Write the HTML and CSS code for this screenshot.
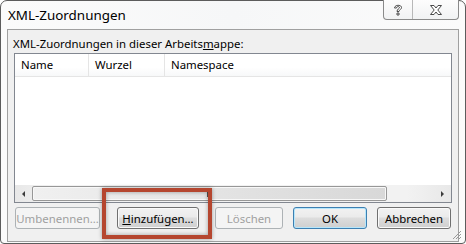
FILE: index.html
```html
<!DOCTYPE html>
<html lang="de">

<head>
    <meta charset="UTF-8">
    <title>XML-Zuordnungen</title>
    <link rel="stylesheet" href="styles.css">
</head>

<body>

    <div class="window">
        <div class="titlebar">
            <span class="title">XML-Zuordnungen</span>
        </div>

        <div class="capbuttons">
            <span class="capbtn help">
                <svg width="12" height="14" viewBox="0 0 12 14">
                    <path d="M2.5 5 C2.5 1.5 9.5 1.5 9.5 4.5 C9.5 6.5 7 6.8 7 8.5 L5 8.5 C5 6 7.5 5.8 7.5 4.5 C7.5 3.2 4.5 3.2 4.5 5 Z M5 10 L7 10 L7 12 L5 12 Z"
                        fill="#fff" stroke="#4a4a4a" stroke-width="1" stroke-linejoin="round" />
                </svg>
            </span>
            <span class="capbtn close">
                <svg width="14" height="12" viewBox="0 0 14 12">
                    <path d="M1.5 1.5 L5 1.5 L7 4 L9 1.5 L12.5 1.5 L8.8 6 L12.5 10.5 L9 10.5 L7 8 L5 10.5 L1.5 10.5 L5.2 6 Z"
                        fill="#fff" stroke="#4a4a4a" stroke-width="1" stroke-linejoin="round" />
                </svg>
            </span>
        </div>

        <div class="panel">
            <div class="caption">XML-Zuordnungen in dieser Arbeits<u>m</u>appe:</div>

            <div class="list">
                <div class="listhead">
                    <span class="col colname">Name</span>
                    <span class="col colroot">Wurzel</span>
                    <span class="col colns">Namespace</span>
                </div>
                <div class="listbody"></div>
                <div class="hscroll">
                    <span class="arrow left"></span>
                    <div class="track">
                        <div class="thumb"><span class="grip"></span></div>
                    </div>
                    <span class="arrow right"></span>
                </div>
            </div>

            <div class="buttons">
                <button class="btn disabled rename">Umbenennen…</button>
                <button class="btn add"><u>H</u>inzufügen…</button>
                <button class="btn disabled delete">Löschen</button>
                <button class="btn default ok">OK</button>
                <button class="btn cancel">Abbrechen</button>
            </div>
        </div>

        <svg class="sizegrip" width="10" height="10" viewBox="0 0 10 10">
            <path d="M9 1 L1 9 M9 4 L4 9 M9 7 L7 9" stroke="#9a9a9a" stroke-width="1" />
        </svg>
    </div>

    <div class="callout"></div>

</body>

</html>
```

FILE: styles.css
```css
html {
    font-family: "Noto Sans", "Open Sans", sans-serif;
    font-size: 11.4px;
}

body {
    margin: 0;
    background-color: #ffffff;
}

.window {
    box-sizing: border-box;
    position: relative;
    width: 466px;
    height: 244px;
    border: 1px solid #5c5c5c;
    border-radius: 7px 7px 4px 4px;
    background: linear-gradient(90deg, #fbfbfb, #f6f7f8 50%, #fbfbfb);
    padding: 0 6px 1px 6px;
    display: flex;
    flex-direction: column;
}

.titlebar {
    height: 28px;
    display: flex;
    align-items: center;
}

.title {
    font-size: 13.4px;
    padding-left: 1px;
    margin-top: -1px;
    color: #000000;
}

.capbuttons {
    position: absolute;
    top: -1px;
    left: 382px;
    width: 74px;
    height: 19px;
    border: 1px solid #8a8a8a;
    border-top: none;
    border-radius: 0 0 4px 4px;
    background: linear-gradient(#fdfdfd, #f1f2f3);
    display: flex;
}

.capbtn {
    display: flex;
    align-items: center;
    justify-content: center;
}

.help {
    width: 28px;
    border-right: 1px solid #b8b8b8;
}

.close {
    flex: 1;
}

.panel {
    flex: 1;
    border: 1px solid #a0a0a0;
    background-color: #f0f0f0;
    padding: 0 6px;
    display: flex;
    flex-direction: column;
}

.caption {
    margin-top: 6px;
    margin-left: -1px;
    line-height: 16px;
    height: 16px;
}

.list {
    box-sizing: border-box;
    margin-top: 1px;
    width: 438px;
    height: 150px;
    border: 1px solid #828790;
    background-color: #ffffff;
    display: flex;
    flex-direction: column;
}

.listhead {
    height: 22px;
    border-bottom: 1px solid #e5e5e5;
    background: linear-gradient(#ffffff 60%, #f7f8f9);
    display: flex;
    align-items: center;
}

.col {
    box-sizing: border-box;
    height: 22px;
    line-height: 22px;
    padding-left: 6px;
    border-right: 1px solid #e5e5e5;
}

.colname {
    width: 74px;
}

.colroot {
    width: 76px;
}

.colns {
    width: 150px;
    border-right: none;
}

.listbody {
    flex: 1;
}

.hscroll {
    height: 17px;
    background: linear-gradient(90deg, #e8e8e8, #f2f2f2 10%, #f2f2f2 90%, #e8e8e8);
    display: flex;
    align-items: center;
}

.arrow {
    width: 17px;
    height: 17px;
    display: flex;
    align-items: center;
    justify-content: center;
}

.arrow::before {
    content: "";
    border-top: 3px solid transparent;
    border-bottom: 3px solid transparent;
}

.arrow.left::before {
    border-right: 3px solid #3c3c3c;
}

.arrow.right::before {
    border-left: 3px solid #3c3c3c;
}

.track {
    flex: 1;
    height: 17px;
    display: flex;
    align-items: center;
}

.thumb {
    box-sizing: border-box;
    width: 355px;
    height: 15px;
    border: 1px solid #979797;
    border-radius: 2px;
    background: linear-gradient(90deg, #f0f0f0, #e4e4e4 50%, #d8d8d8);
    box-shadow: inset 0 0 0 1px #f8f8f8;
    display: flex;
    align-items: center;
    justify-content: center;
}

.grip {
    width: 5px;
    height: 7px;
    background: repeating-linear-gradient(90deg, #555555 0 1px, transparent 1px 2px);
}

.buttons {
    margin-top: 4px;
    padding-left: 1px;
    display: flex;
}

.btn {
    box-sizing: border-box;
    height: 22px;
    padding: 0;
    font-family: "Noto Sans", "Open Sans", sans-serif;
    font-size: 11.4px;
    color: #000000;
    border: 1px solid #707070;
    border-radius: 3px;
    background: linear-gradient(#f2f2f2 0%, #ebebeb 45%, #dddddd 50%, #cfcfcf 100%);
    box-shadow: inset 0 0 0 1px #fafafa;
}

.btn.disabled {
    color: #a0a0a0;
    border-color: #adb2b5;
    background: #f4f4f4;
    box-shadow: none;
}

.btn.default {
    border-color: #3c7fb1;
    box-shadow: inset 0 0 0 1px #b6e6fb;
}

.rename {
    width: 85px;
}

.add {
    width: 82px;
    margin-left: 17px;
}

.delete {
    width: 68px;
    margin-left: 16px;
}

.ok {
    width: 74px;
    margin-left: 10px;
}

.cancel {
    width: 74px;
    margin-left: 10px;
}

.sizegrip {
    position: absolute;
    right: 3px;
    bottom: 3px;
}

.callout {
    position: absolute;
    left: 102px;
    top: 188px;
    width: 110px;
    height: 51px;
    box-sizing: border-box;
    border: 4px solid #b5462f;
    box-shadow: 0 0 4px rgba(0, 0, 0, 0.35), inset 0 0 4px rgba(0, 0, 0, 0.35);
}
```
